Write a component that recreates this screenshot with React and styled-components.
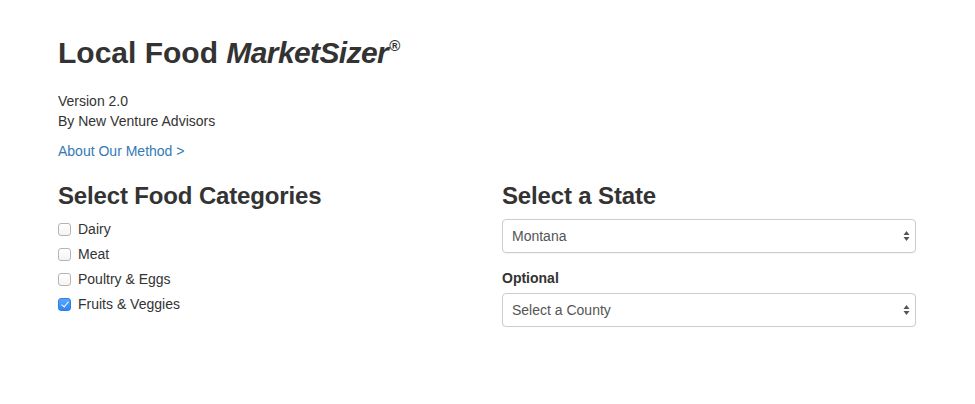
import React, { useState } from 'react';
import styled, { createGlobalStyle } from 'styled-components';

const GlobalStyle = createGlobalStyle`
  html, body {
    margin: 0;
    padding: 0;
    background: #fff;
  }
  body {
    font-family: "Liberation Sans", Arial, sans-serif;
    font-size: 14px;
    line-height: 20px;
    color: #333;
  }
`;

const Page = styled.div`
  padding: 36px 59px 0 58px;
`;

const Title = styled.h1`
  margin: 0 0 22px;
  font-size: 30px;
  line-height: 33px;
  font-weight: 700;
  color: #333;

  em {
    font-style: italic;
    letter-spacing: -0.6px;
  }

  sup {
    font-size: 15px;
    line-height: 0;
    vertical-align: 0;
    position: relative;
    top: -12px;
    left: 1px;
    font-weight: 700;
  }
`;

const Meta = styled.p`
  margin: 0 0 10px;
`;

const MethodLink = styled.a`
  display: block;
  color: #337ab7;
  text-decoration: none;
  cursor: pointer;
`;

const Row = styled.div`
  display: grid;
  grid-template-columns: 1fr 1fr;
  column-gap: 30px;
  margin-top: 22px;
`;

const Column = styled.section`
  display: flex;
  flex-direction: column;
`;

const Heading = styled.h3`
  margin: 0 0 9.5px;
  font-size: 24px;
  line-height: 26.4px;
  font-weight: 700;
  letter-spacing: -0.15px;
  color: #333;
`;

const CheckList = styled.div`
  display: flex;
  flex-direction: column;
  gap: 5px;
`;

const CheckRow = styled.label`
  display: flex;
  align-items: center;
  gap: 7px;
  height: 20px;
  cursor: pointer;
`;

const Box = styled.input.attrs({ type: 'checkbox' })`
  appearance: none;
  margin: 0;
  width: 13px;
  height: 13px;
  border-radius: 3px;
  border: 1px solid #b4b4b4;
  background: linear-gradient(#fff, #f4f4f4);
  box-sizing: border-box;
  position: relative;
  top: 1px;

  &:checked {
    border-color: #2d7fe8;
    background: linear-gradient(#5aa6fb, #2f86f3);
  }

  &:checked::after {
    content: '';
    position: absolute;
    left: 3.5px;
    top: 1px;
    width: 3px;
    height: 6px;
    border: solid #fff;
    border-width: 0 1.6px 1.6px 0;
    transform: rotate(40deg);
  }
`;

const Field = styled.div`
  position: relative;
  margin-bottom: ${p => p.$gap || 0}px;
`;

const Select = styled.select`
  appearance: none;
  width: 100%;
  height: 34px;
  box-sizing: border-box;
  padding: 0 28px 0 9px;
  border: 1px solid #ccc;
  border-radius: 4px;
  background: #fff;
  box-shadow: 0 1px 1px rgba(0, 0, 0, 0.04);
  font-family: "Liberation Sans", Arial, sans-serif;
  font-size: 14px;
  color: #555;
  outline: none;
`;

const Arrows = styled.svg`
  position: absolute;
  right: 6px;
  top: 50%;
  transform: translateY(-50%);
  pointer-events: none;
`;

const FieldLabel = styled.label`
  display: block;
  font-weight: 700;
  margin: 0 0 5px;
`;

const categories = ['Dairy', 'Meat', 'Poultry & Eggs', 'Fruits & Veggies'];

const SelectField = ({ value, options, gap }) => (
  <Field $gap={gap}>
    <Select defaultValue={value}>
      {options.map(o => (
        <option key={o}>{o}</option>
      ))}
    </Select>
    <Arrows width="7" height="11" viewBox="0 0 7 11">
      <path d="M3.5 0.5 L6.5 4.6 L0.5 4.6 Z" fill="#555" />
      <path d="M3.5 10.5 L6.5 6.4 L0.5 6.4 Z" fill="#555" />
    </Arrows>
  </Field>
);

const App = () => {
  const [checked, setChecked] = useState({ 'Fruits & Veggies': true });

  return (
    <Page>
      <GlobalStyle />
      <Title>
        Local Food <em>MarketSizer</em>
        <sup>®</sup>
      </Title>
      <Meta>
        Version 2.0
        <br />
        By New Venture Advisors
      </Meta>
      <MethodLink>About Our Method &gt;</MethodLink>

      <Row>
        <Column>
          <Heading>Select Food Categories</Heading>
          <CheckList>
            {categories.map(c => (
              <CheckRow key={c}>
                <Box
                  checked={!!checked[c]}
                  onChange={() => setChecked({ ...checked, [c]: !checked[c] })}
                />
                {c}
              </CheckRow>
            ))}
          </CheckList>
        </Column>
        <Column>
          <Heading>Select a State</Heading>
          <SelectField value="Montana" options={['Montana', 'Idaho', 'Wyoming']} gap={15} />
          <FieldLabel>Optional</FieldLabel>
          <SelectField value="Select a County" options={['Select a County']} />
        </Column>
      </Row>
    </Page>
  );
};

export default App;
